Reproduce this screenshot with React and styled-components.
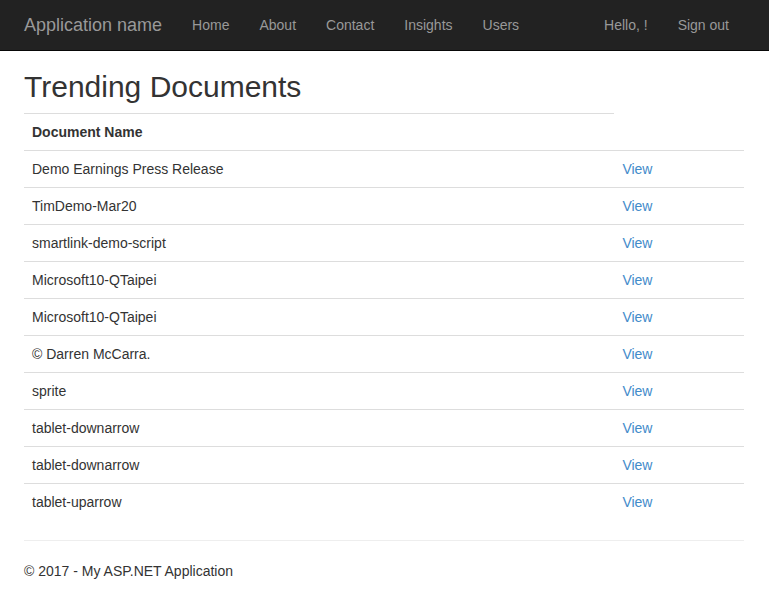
import React from "react";
import styled, { createGlobalStyle } from "styled-components";

const GlobalStyle = createGlobalStyle`
  *, *::before, *::after { box-sizing: border-box; }
  body {
    margin: 0;
    font-family: "Helvetica Neue", Helvetica, Arial, "Liberation Sans", sans-serif;
    font-size: 14px;
    line-height: 20px;
    color: #333;
    background: #fff;
  }
`;

const Navbar = styled.header`
  background: #222;
  border-bottom: 1px solid #080808;
`;

const Container = styled.div`
  max-width: 751px;
  margin: 0 auto;
  padding: 0 16px 0 15px;
`;

const NavContainer = styled(Container)`
  display: flex;
  align-items: center;
  min-height: 50px;
`;

const Brand = styled.a`
  padding: 15px 15px 15px 0;
  font-size: 18px;
  color: #999;
  text-decoration: none;
`;

const NavList = styled.ul`
  display: flex;
  margin: 0;
  margin-left: ${(p) => (p.$end ? "auto" : "0")};
  padding: 0;
  list-style: none;
`;

const NavLink = styled.a`
  display: block;
  padding: 15px;
  color: #999;
  text-decoration: none;
  &:hover { color: #fff; }
`;

const Title = styled.h2`
  margin: 19px 0 10px;
  font-size: 30px;
  font-weight: 500;
  line-height: 33px;
`;

const Table = styled.table`
  width: 100%;
  margin-bottom: 20px;
  border-collapse: collapse;
  border-spacing: 0;
`;

const HeadCell = styled.th`
  width: 82%;
  padding: 8px;
  border-top: 1px solid #ddd;
  text-align: left;
  font-weight: 700;
`;

const Cell = styled.td`
  padding: 8px;
  border-top: 1px solid #ddd;
`;

const ViewLink = styled.a`
  color: #428bca;
  text-decoration: none;
  &:hover { text-decoration: underline; }
`;

const Divider = styled.hr`
  margin: 20px 0;
  border: 0;
  border-top: 1px solid #eee;
`;

const FooterText = styled.p`
  margin: 0 0 10px;
`;

const links = ["Home", "About", "Contact", "Insights", "Users"];
const accountLinks = ["Hello, !", "Sign out"];
const documents = [
  "Demo Earnings Press Release",
  "TimDemo-Mar20",
  "smartlink-demo-script",
  "Microsoft10-QTaipei",
  "Microsoft10-QTaipei",
  "© Darren McCarra.",
  "sprite",
  "tablet-downarrow",
  "tablet-downarrow",
  "tablet-uparrow",
];

function Menu({ items, end }) {
  return (
    <NavList $end={end}>
      {items.map((item) => (
        <li key={item}>
          <NavLink href="#">{item}</NavLink>
        </li>
      ))}
    </NavList>
  );
}

export default function App() {
  return (
    <>
      <GlobalStyle />
      <Navbar>
        <NavContainer as="nav">
          <Brand href="#">Application name</Brand>
          <Menu items={links} />
          <Menu items={accountLinks} end />
        </NavContainer>
      </Navbar>
      <Container>
        <main>
          <Title>Trending Documents</Title>
          <Table>
            <tbody>
              <tr>
                <HeadCell scope="col">Document Name</HeadCell>
              </tr>
              {documents.map((name, index) => (
                <tr key={index}>
                  <Cell>{name}</Cell>
                  <Cell>
                    <ViewLink href="#">View</ViewLink>
                  </Cell>
                </tr>
              ))}
            </tbody>
          </Table>
        </main>
        <Divider />
        <footer>
          <FooterText>© 2017 - My ASP.NET Application</FooterText>
        </footer>
      </Container>
    </>
  );
}
